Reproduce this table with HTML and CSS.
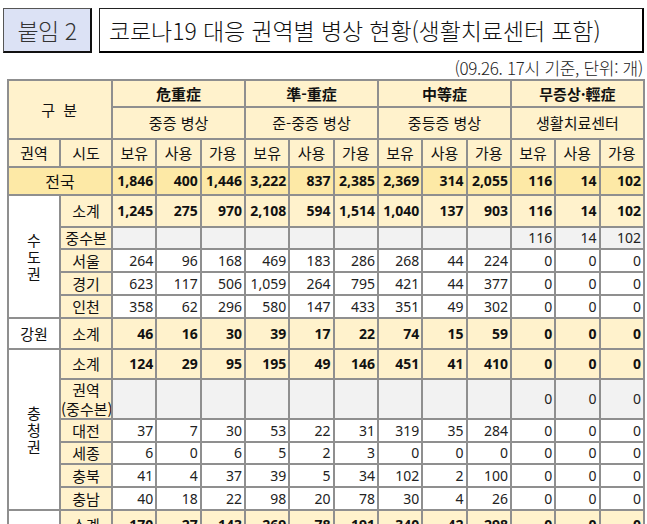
FILE: index.html
```html
<!DOCTYPE html>
<html lang="ko">
<head>
<meta charset="utf-8">
<title>코로나19 대응 권역별 병상 현황</title>
<link rel="stylesheet" href="styles.css">
</head>
<body>
<div class="page">
  <div class="title-row">
    <div class="tag">붙임 2</div>
    <div class="title"><span class="title-text">코로나19 대응 권역별 병상 현황(생활치료센터 포함)</span></div>
  </div>
  <div class="note">(09.26. 17시 기준, 단위: 개)</div>
  <table class="beds">
    <colgroup>
      <col class="c-region"><col class="c-city">
      <col class="c-num"><col class="c-num"><col class="c-num">
      <col class="c-num"><col class="c-num"><col class="c-num">
      <col class="c-num"><col class="c-num"><col class="c-num">
      <col class="c-num"><col class="c-num"><col class="c-num">
    </colgroup>
    <tr class="h1">
      <th colspan="2" rowspan="2" class="hd gubun">구 분</th>
      <th colspan="3" class="hd b">危重症</th>
      <th colspan="3" class="hd b">準-重症</th>
      <th colspan="3" class="hd b">中等症</th>
      <th colspan="3" class="hd b">무증상·輕症</th>
    </tr>
    <tr class="h2">
      <th colspan="3" class="hd">중증 병상</th>
      <th colspan="3" class="hd">준-중증 병상</th>
      <th colspan="3" class="hd">중등증 병상</th>
      <th colspan="3" class="hd">생활치료센터</th>
    </tr>
    <tr class="h3">
      <th class="hd">권역</th><th class="hd">시도</th>
      <th class="hd">보유</th><th class="hd">사용</th><th class="hd">가용</th>
      <th class="hd">보유</th><th class="hd">사용</th><th class="hd">가용</th>
      <th class="hd">보유</th><th class="hd">사용</th><th class="hd">가용</th>
      <th class="hd">보유</th><th class="hd">사용</th><th class="hd">가용</th>
    </tr>
    <tr class="total r28">
      <th colspan="2" class="lab">전국</th>
      <td>1,846</td><td>400</td><td>1,446</td><td>3,222</td><td>837</td><td>2,385</td><td>2,369</td><td>314</td><td>2,055</td><td class="cc">116</td><td>14</td><td>102</td>
    </tr>
    <tr class="sub r32">
      <th rowspan="5" class="region">수<br>도<br>권</th>
      <th class="lab">소계</th>
      <td>1,245</td><td>275</td><td>970</td><td>2,108</td><td>594</td><td>1,514</td><td>1,040</td><td>137</td><td>903</td><td class="cc">116</td><td>14</td><td>102</td>
    </tr>
    <tr class="central r22">
      <th class="lab">중수본</th>
      <td></td><td></td><td></td><td></td><td></td><td></td><td></td><td></td><td></td><td>116</td><td>14</td><td>102</td>
    </tr>
    <tr class="r23">
      <th class="lab">서울</th>
      <td>264</td><td>96</td><td>168</td><td>469</td><td>183</td><td>286</td><td>268</td><td>44</td><td>224</td><td>0</td><td>0</td><td>0</td>
    </tr>
    <tr class="r23">
      <th class="lab">경기</th>
      <td>623</td><td>117</td><td>506</td><td>1,059</td><td>264</td><td>795</td><td>421</td><td>44</td><td>377</td><td>0</td><td>0</td><td>0</td>
    </tr>
    <tr class="r23">
      <th class="lab">인천</th>
      <td>358</td><td>62</td><td>296</td><td>580</td><td>147</td><td>433</td><td>351</td><td>49</td><td>302</td><td>0</td><td>0</td><td>0</td>
    </tr>
    <tr class="sub r31">
      <th class="region">강원</th>
      <th class="lab">소계</th>
      <td>46</td><td>16</td><td>30</td><td>39</td><td>17</td><td>22</td><td>74</td><td>15</td><td>59</td><td>0</td><td>0</td><td>0</td>
    </tr>
    <tr class="sub r30">
      <th rowspan="6" class="region">충<br>청<br>권</th>
      <th class="lab">소계</th>
      <td>124</td><td>29</td><td>95</td><td>195</td><td>49</td><td>146</td><td>451</td><td>41</td><td>410</td><td>0</td><td>0</td><td>0</td>
    </tr>
    <tr class="central r40">
      <th class="lab two">권역<br>(중수본)</th>
      <td></td><td></td><td></td><td></td><td></td><td></td><td></td><td></td><td></td><td>0</td><td>0</td><td>0</td>
    </tr>
    <tr class="r23">
      <th class="lab">대전</th>
      <td>37</td><td>7</td><td>30</td><td>53</td><td>22</td><td>31</td><td>319</td><td>35</td><td>284</td><td>0</td><td>0</td><td>0</td>
    </tr>
    <tr class="r22">
      <th class="lab">세종</th>
      <td>6</td><td>0</td><td>6</td><td>5</td><td>2</td><td>3</td><td>0</td><td>0</td><td>0</td><td>0</td><td>0</td><td>0</td>
    </tr>
    <tr class="r23">
      <th class="lab">충북</th>
      <td>41</td><td>4</td><td>37</td><td>39</td><td>5</td><td>34</td><td>102</td><td>2</td><td>100</td><td>0</td><td>0</td><td>0</td>
    </tr>
    <tr class="r23">
      <th class="lab">충남</th>
      <td>40</td><td>18</td><td>22</td><td>98</td><td>20</td><td>78</td><td>30</td><td>4</td><td>26</td><td>0</td><td>0</td><td>0</td>
    </tr>
    <tr class="sub r30">
      <th class="region"></th>
      <th class="lab">소계</th>
      <td>170</td><td>27</td><td>143</td><td>269</td><td>78</td><td>191</td><td>340</td><td>42</td><td>298</td><td>0</td><td>0</td><td>0</td>
    </tr>
  </table>
</div>
</body>
</html>
```
FILE: styles.css
```css
html, body {
  margin: 0;
  padding: 0;
  background: #ffffff;
}
body {
  font-family: "Noto Sans", "Noto Sans CJK KR", sans-serif;
  color: #111;
}
.page {
  width: 647px;
  overflow: hidden;
}
.title-row {
  display: flex;
  gap: 7px;
  padding: 8px 0 0 3px;
  height: 45px;
}
.tag {
  width: 86px;
  height: 42px;
  background: #dce2f5;
  border: 1px solid #555;
  border-right-width: 2px;
  border-bottom-width: 2px;
  border-right-color: #111;
  border-bottom-color: #111;
  display: flex;
  align-items: center;
  justify-content: center;
  font-family: "Noto Sans CJK KR", sans-serif;
  font-weight: 300;
  font-size: 23px;
  color: #333;
  letter-spacing: -0.5px;
}
.title {
  width: 533px;
  height: 42px;
  border: 1px solid #222;
  border-right-width: 2px;
  border-bottom-width: 2px;
  border-right-color: #000;
  border-bottom-color: #000;
  display: flex;
  align-items: center;
  padding-left: 9px;
  box-sizing: content-box;
}
.title-text {
  font-family: "Noto Sans CJK KR", sans-serif;
  font-weight: 300;
  font-size: 23px;
  letter-spacing: -0.1px;
  color: #111;
  white-space: nowrap;
}
.note {
  text-align: right;
  padding-right: 4px;
  margin-top: 4px;
  height: 22px;
  line-height: 22px;
  font-family: "Noto Sans CJK KR", sans-serif;
  font-weight: 300;
  font-size: 17px;
  letter-spacing: -0.3px;
  color: #222;
}
.beds {
  margin-left: 7px;
  border-collapse: collapse;
  table-layout: fixed;
  width: 638px;
  border: 2px solid #8a8a8a;
}
.c-region, .c-city { width: 52px; }
.c-num { width: 44.3px; }
.beds th, .beds td {
  border: 2px solid #8f8f8f;
  padding: 0 2px 0 0;
  font-size: 14px;
  line-height: 16px;
  white-space: nowrap;
  overflow: hidden;
}
.beds td {
  text-align: right;
  background: #fff;
  color: #222;
}
.beds th {
  font-family: "Noto Sans CJK KR", sans-serif;
  font-size: 15px;
  font-weight: 400;
  text-align: center;
  padding: 0;
  color: #111;
}
.hd { background: #fff2cc; }
.hd.b { font-weight: 700; }
.gubun { letter-spacing: 2px; }
.h1 { height: 27px; }
.h2 { height: 32px; }
.h3 { height: 28px; }
.r22 { height: 22px; }
.r23 { height: 23px; }
.r28 { height: 28px; }
.r30 { height: 30px; }
.r31 { height: 31px; }
.r32 { height: 32px; }
.r40 { height: 40px; }
.lab { background: #fff2cc; }
.beds .region { background: #fff; line-height: 17px; }
.total th, .total td {
  background: #fde9a6;
}
.total td {
  color: #111;
  font-weight: 700;
}
.total th { font-size: 16px; }
.sub td {
  background: #fff2cc;
  font-weight: 700;
  color: #111;
}
.central td { background: #f2f2f2; }
.beds .lab.two { line-height: 19px; }
.cc { padding-right: 8px; }
```
